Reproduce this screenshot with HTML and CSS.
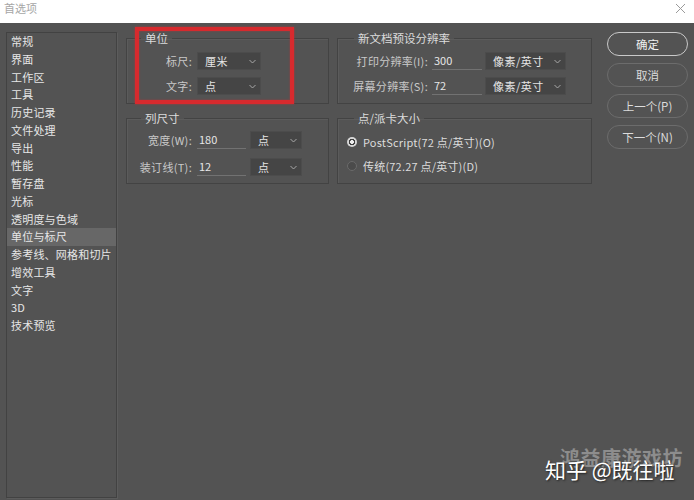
FILE: index.html
```html
<!DOCTYPE html>
<html lang="zh-CN">
<head>
<meta charset="utf-8">
<title>首选项</title>
<link rel="stylesheet" href="styles.css">
</head>
<body>
<div class="window">
  <div class="titlebar">
    <span class="title">首选项</span>
    <svg class="close" width="11" height="11" viewBox="0 0 11 11"><path d="M1 1L10 10M10 1L1 10" stroke="#9a9a9a" stroke-width="1" fill="none"/></svg>
  </div>
  <div class="content">
    <ul class="sidebar">
      <li>常规</li>
      <li>界面</li>
      <li>工作区</li>
      <li>工具</li>
      <li>历史记录</li>
      <li>文件处理</li>
      <li>导出</li>
      <li>性能</li>
      <li>暂存盘</li>
      <li>光标</li>
      <li>透明度与色域</li>
      <li class="active">单位与标尺</li>
      <li>参考线、网格和切片</li>
      <li>增效工具</li>
      <li>文字</li>
      <li>3D</li>
      <li>技术预览</li>
    </ul>
    <div class="panels">
      <fieldset class="group group-left rows-tight">
        <legend>单位</legend>
        <div class="row">
          <span class="label label-left">标尺:</span>
          <div class="select sel-unit"><span>厘米</span><svg width="7" height="5" viewBox="0 0 7 5"><path d="M0.5 1L3.5 4L6.5 1" stroke="#a8a8a8" fill="none"/></svg></div>
        </div>
        <div class="row">
          <span class="label label-left">文字:</span>
          <div class="select sel-unit"><span>点</span><svg width="7" height="5" viewBox="0 0 7 5"><path d="M0.5 1L3.5 4L6.5 1" stroke="#a8a8a8" fill="none"/></svg></div>
        </div>
      </fieldset>
      <fieldset class="group group-right rows-tight">
        <legend>新文档预设分辨率</legend>
        <div class="row">
          <span class="label label-right">打印分辨率(I):</span>
          <div class="input in-right">300</div>
          <div class="select sel-res"><span>像素/英寸</span><svg width="7" height="5" viewBox="0 0 7 5"><path d="M0.5 1L3.5 4L6.5 1" stroke="#a8a8a8" fill="none"/></svg></div>
        </div>
        <div class="row">
          <span class="label label-right">屏幕分辨率(S):</span>
          <div class="input in-right">72</div>
          <div class="select sel-res"><span>像素/英寸</span><svg width="7" height="5" viewBox="0 0 7 5"><path d="M0.5 1L3.5 4L6.5 1" stroke="#a8a8a8" fill="none"/></svg></div>
        </div>
      </fieldset>
      <fieldset class="group group-left rows-wide">
        <legend>列尺寸</legend>
        <div class="row">
          <span class="label label-left">宽度(W):</span>
          <div class="input in-left">180</div>
          <div class="select sel-col"><span>点</span><svg width="7" height="5" viewBox="0 0 7 5"><path d="M0.5 1L3.5 4L6.5 1" stroke="#a8a8a8" fill="none"/></svg></div>
        </div>
        <div class="row">
          <span class="label label-left">装订线(T):</span>
          <div class="input in-left">12</div>
          <div class="select sel-col"><span>点</span><svg width="7" height="5" viewBox="0 0 7 5"><path d="M0.5 1L3.5 4L6.5 1" stroke="#a8a8a8" fill="none"/></svg></div>
        </div>
      </fieldset>
      <fieldset class="group group-right rows-radio">
        <legend>点/派卡大小</legend>
        <div class="row radio-row">
          <span class="radio checked"></span>
          <span class="radio-text">PostScript(72 点/英寸)(O)</span>
        </div>
        <div class="row radio-row">
          <span class="radio"></span>
          <span class="radio-text">传统(72.27 点/英寸)(D)</span>
        </div>
      </fieldset>
    </div>
    <div class="buttons">
      <button class="btn primary">确定</button>
      <button class="btn">取消</button>
      <button class="btn">上一个(P)</button>
      <button class="btn">下一个(N)</button>
    </div>
  </div>
  <div class="highlight-box"></div>
  <div class="wm-back">鸿益康游戏坊</div>
  <div class="wm-front">知乎 @既往啦</div>
</div>
</body>
</html>
```

FILE: styles.css
```css
* { box-sizing: border-box; }
html, body { margin: 0; padding: 0; }
body {
  width: 694px;
  height: 500px;
  overflow: hidden;
  background: #535353;
  font-family: "Noto Sans CJK SC", "Noto Sans", sans-serif;
  font-size: 11px;
  color: #dedede;
}
.window {
  position: relative;
  width: 694px;
  height: 500px;
  display: flex;
  flex-direction: column;
}
.titlebar {
  height: 23px;
  background: #ffffff;
  display: flex;
  justify-content: space-between;
  align-items: flex-start;
  padding: 2px 4px 0 4px;
}
.title {
  color: #a6a6a6;
  font-size: 11px;
  line-height: 13px;
}
.close { margin: 1px 4px 0 0; }

.content {
  flex: 1;
  display: flex;
  align-items: flex-start;
  padding: 8px 0 0 6px;
}
.sidebar {
  list-style: none;
  margin: 1px 0 0 0;
  padding: 0;
  width: 111px;
  height: 466px;
  border: 1px solid #424242;
  box-shadow: 1px 1px 0 #5c5c5c;
}
.sidebar li {
  height: 17.75px;
  line-height: 17.75px;
  padding-left: 4px;
  color: #e6e6e6;
  white-space: nowrap;
  letter-spacing: 0.2px;
}
.sidebar li.active { background: #676767; }

.panels {
  margin-left: 9px;
  display: grid;
  grid-template-columns: 203px 255px;
  column-gap: 8px;
  row-gap: 7px;
}
.group {
  margin: 0;
  min-width: 0;
  height: 73px;
  padding: 0 8px;
  border: 1px solid #434343;
  box-shadow: inset 1px 1px 0 #5b5b5b;
  display: flex;
  flex-direction: column;
}
.group legend {
  padding: 0 4px;
  line-height: 14px;
  font-size: 11.5px;
  color: #dcdcdc;
  margin-left: 6px;
}
.group-right legend { margin-left: 8px; }
.rows-tight { padding-top: 7px; gap: 7px; }
.rows-wide { padding-top: 6px; gap: 9px; }
.rows-radio { padding-top: 8px; gap: 6px; }

.row {
  display: flex;
  align-items: center;
  height: 18px;
}
.label {
  color: #c9c9c9;
  text-align: right;
  white-space: nowrap;
  line-height: 18px;
  letter-spacing: 0.3px;
}
.label-left { width: 57px; margin-right: 5px; }
.label-right { width: 82px; margin-right: 4px; }

.select {
  height: 18px;
  background: #454545;
  border: 1px solid #4c4c4c;
  display: flex;
  align-items: center;
  justify-content: space-between;
  padding: 0 4px 0 7px;
  color: #e6e6e6;
  line-height: 16px;
  letter-spacing: 0.5px;
}
.sel-unit { width: 64px; }
.sel-col { width: 52px; margin-left: 4px; }
.sel-res { width: 81px; margin-left: 3px; }

.input {
  height: 18px;
  line-height: 17px;
  border-bottom: 1px solid #727272;
  padding-left: 2px;
  color: #e6e6e6;
}
.in-left { width: 49px; }
.in-right { width: 50px; }

.radio-row { padding-left: 1px; }
.radio {
  width: 10px;
  height: 10px;
  border-radius: 50%;
  background: #4b4b4b;
  border: 1px solid #6a6a6a;
  margin-right: 6px;
}
.radio.checked {
  border: none;
  background: radial-gradient(circle, #eeeeee 0 1.6px, #3f3f3f 2.2px 3px, #d6d6d6 3.5px);
}
.radio-text { color: #dcdcdc; white-space: nowrap; letter-spacing: 0.2px; }

.buttons {
  margin: 1px 0 0 15px;
  display: flex;
  flex-direction: column;
  gap: 7px;
}
.btn {
  width: 81px;
  height: 24px;
  border-radius: 12px;
  border: 1px solid #6c6c6c;
  background: transparent;
  color: #dcdcdc;
  font-family: "Noto Sans CJK SC", "Noto Sans", sans-serif;
  font-size: 11.5px;
  padding: 0;
  line-height: 22px;
}
.btn.primary {
  border: 1.5px solid #c9c9c9;
  color: #f0f0f0;
}

.highlight-box {
  position: absolute;
  left: 135px;
  top: 27px;
  width: 159px;
  height: 77px;
  border: 4px solid #d72a2e;
  box-shadow: 0 0 2px rgba(215, 42, 46, 0.7), inset 0 0 2px rgba(215, 42, 46, 0.6);
}
.wm-back {
  position: absolute;
  left: 560px;
  top: 446px;
  font-size: 20px;
  font-weight: bold;
  line-height: 24px;
  color: #8d8d8d;
  letter-spacing: 0.5px;
  white-space: nowrap;
}
.wm-front {
  position: absolute;
  left: 545px;
  top: 456px;
  font-size: 21px;
  line-height: 26px;
  color: #ffffff;
  text-shadow: 1px 1px 2px #222222;
  white-space: nowrap;
}
```
